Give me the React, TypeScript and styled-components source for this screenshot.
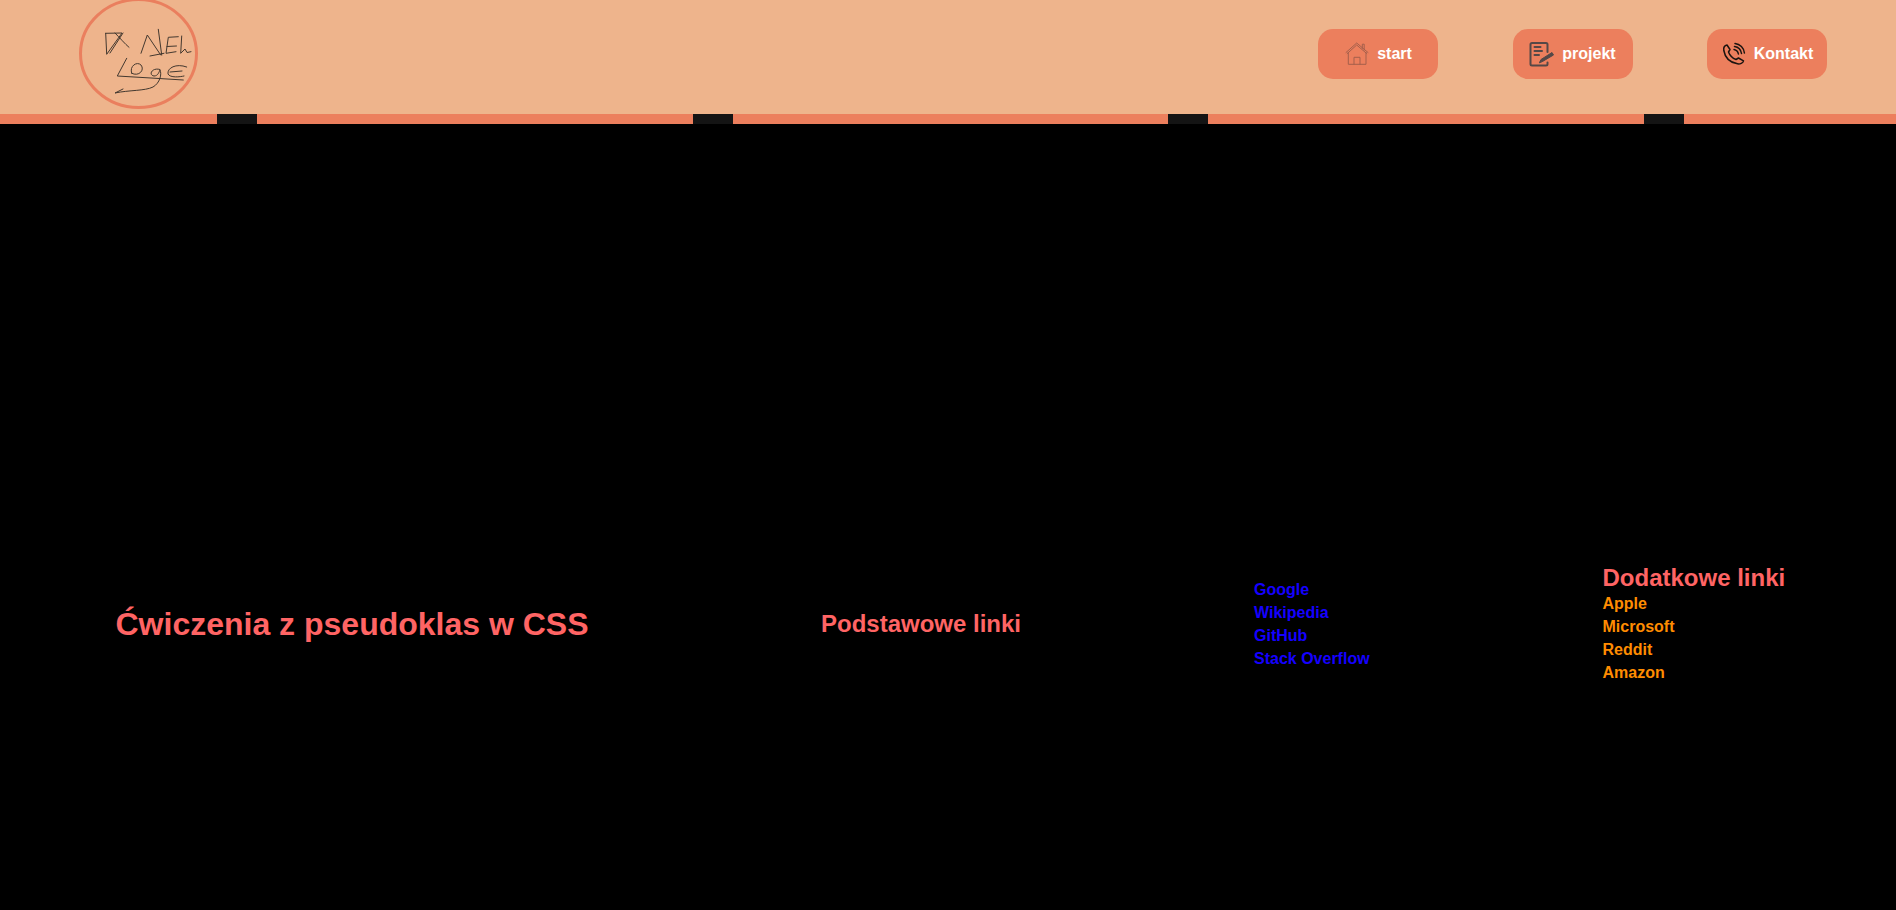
import React from 'react';
import styled, { createGlobalStyle } from 'styled-components';

const GlobalStyle = createGlobalStyle`
    * {
        box-sizing: border-box;
        margin: 0;
        padding: 0;
    }
    html, body {
        height: 100%;
        background: #000;
        overflow: hidden;
        font-family: "Liberation Sans", Arial, sans-serif;
    }
`

const basicLinks = ['Google', 'Wikipedia', 'GitHub', 'Stack Overflow']
const extraLinks = ['Apple', 'Microsoft', 'Reddit', 'Amazon']
const stripSegments = [217, 436, 435, 436, 212]

const Logo = () => (
    <LogoSvg viewBox="0 0 120 110" width="120" height="110">
        <ellipse cx="59.5" cy="53.5" rx="58" ry="54" fill="none" stroke="#ea7f5e" strokeWidth="3" />
        <g fill="none" stroke="#43382f" strokeWidth="1" strokeLinejoin="round" strokeLinecap="round">
            <path d="M26.7 33.3 L27.7 54.3 L43 33 L26.7 33.3" />
            <path d="M36 33 C41 38 46 44 50 47.3 M44 33 L31 53" />
            <path d="M62 53.3 L68.3 35 L81.7 55 M79.3 29.3 L82.7 55 M71 56 L85 53.3" />
            <path d="M99.3 36.7 L89.3 37.3 L87 53.3 L97 51.7 M88 46.5 L97.5 46" />
            <path d="M102.7 36 L101.7 53.3 L106 49 L108 52.5 L112 51.7" />
            <path d="M47.7 58.3 L38.3 76 L72 78 L104.3 80" />
            <path d="M52.7 73.3 C50 66 58 61 62 65 C66 70 60 77 52.7 73.3" />
            <path d="M81 69.5 C73 67 69 75 75 76 C79 76 80 72 81 70 C83 74 81 83 74 87 C66 91 50 90 36 93 L44 89" />
            <path d="M107.7 67 C97 63 88 68 89 74 C91 78 101 77 105 76 M91 72 L103 71" />
        </g>
    </LogoSvg>
)

const HomeIcon = () => (
    <NavSvg viewBox="0 0 25 25" width="25" height="25" $color="#a5604c" $weight={1}>
        <path d="M2 10.5 L12.7 1 L24 10.5 M3.2 11.6 L12.7 3 L22.8 11.6" />
        <path d="M4.3 10.5 V22.3 H22 V10.5" />
        <path d="M10 22.3 V15.3 H16 V22.3" />
        <path d="M18.3 6.5 V2.2 H20.2 V8" />
    </NavSvg>
)

const ProjectIcon = () => (
    <NavSvg viewBox="0 0 25 25" width="25" height="25" $color="#544847" $weight={2}>
        <path d="M18.5 10 V2.5 Q18.5 1 17 1 H3 Q1.5 1 1.5 2.5 V22 Q1.5 23.5 3 23.5 H17 Q18.5 23.5 18.5 22 V20.5" />
        <path d="M5.5 5 H11.5 M5.5 9 H13 M5.5 13 H10" />
        <path d="M10.5 20.5 L12 17.5 L23 10.5 L24.5 13 L13.5 19.5 Z" fill="#544847" strokeWidth="1" />
    </NavSvg>
)

const PhoneIcon = () => (
    <NavSvg viewBox="0 0 25 25" width="25" height="25" $color="#1b1410" $weight={1.5}>
        <path d="M6 3 L9 7.5 L7.5 10 C9 14 11 16 15 17.5 L17.5 16 L22.5 18.8 C22 21 19 22.3 16.5 21.8 C9 20.5 4 15.5 2.8 8.5 C2.4 5.5 3.6 3.4 6 3 Z" />
        <path d="M13 7.5 C15.2 8 17 9.6 17.4 12 M13.5 4.5 C17 5 20 7.8 20.5 11.5 M14 1.5 C19 2 23 6 23.4 11" />
    </NavSvg>
)

export default function App() {
    return (
        <Page>
            <GlobalStyle />
            <Header>
                <Logo />
                <Nav>
                    <NavButton><HomeIcon /><span>start</span></NavButton>
                    <NavButton><ProjectIcon /><span>projekt</span></NavButton>
                    <NavButton><PhoneIcon /><span>Kontakt</span></NavButton>
                </Nav>
            </Header>
            <Strip>
                {stripSegments.map((width, i) => (
                    <StripPiece key={i} style={{ width }} />
                ))}
            </Strip>
            <Main>
                <Title>Ćwiczenia z pseudoklas w CSS</Title>
                <SubTitle>Podstawowe linki</SubTitle>
                <LinkList>
                    {basicLinks.map(link => <BlueLink key={link}>{link}</BlueLink>)}
                </LinkList>
                <Aside>
                    <AsideTitle>Dodatkowe linki</AsideTitle>
                    {extraLinks.map(link => <OrangeLink key={link}>{link}</OrangeLink>)}
                </Aside>
            </Main>
        </Page>
    );
}

const Page = styled.div`
    background: #000;
`

const Header = styled.header`
    height: 114px;
    background: #eeb48c;
    display: flex;
    align-items: flex-start;
    justify-content: space-between;
    padding: 0 69px 0 79px;
`

const LogoSvg = styled.svg`
    display: block;
    overflow: visible;
`

const Nav = styled.nav`
    display: flex;
    gap: 74.5px;
    padding-top: 29px;
`

const NavButton = styled.a`
    width: 120px;
    height: 50px;
    border-radius: 15px;
    background: #ec7f5d;
    display: flex;
    align-items: center;
    justify-content: center;
    gap: 8px;
    color: #fff;
    font-weight: 700;
    font-size: 16px;
`

const NavSvg = styled.svg<{ $color: string; $weight: number }>`
    flex-shrink: 0;
    overflow: visible;
    fill: none;
    stroke: ${p => p.$color};
    stroke-width: ${p => p.$weight};
    stroke-linejoin: round;
    stroke-linecap: round;
`

const Strip = styled.div`
    height: 10px;
    background: #141414;
    display: flex;
    justify-content: space-between;
`

const StripPiece = styled.div`
    background: #ec7f5d;
`

const Main = styled.main`
    display: flex;
    align-items: center;
    height: 786px;
    padding-top: 214px;
`

const Title = styled.h1`
    color: #ff6464;
    font-size: 32px;
    margin-left: 115.5px;
    width: 705.5px;
`

const SubTitle = styled.h2`
    color: #ff6464;
    font-size: 24px;
    width: 433px;
`

const LinkList = styled.ul`
    list-style: none;
    width: 348.5px;
    display: flex;
    flex-direction: column;
`

const BlueLink = styled.li`
    color: #1500ff;
    font-weight: 700;
    font-size: 16px;
    line-height: 23px;
`

const Aside = styled.aside`
    display: flex;
    flex-direction: column;
`

const AsideTitle = styled.h2`
    color: #ff6464;
    font-size: 24px;
    line-height: 28px;
`

const OrangeLink = styled.a`
    color: #ff8c00;
    font-weight: 700;
    font-size: 16px;
    line-height: 23px;
`
